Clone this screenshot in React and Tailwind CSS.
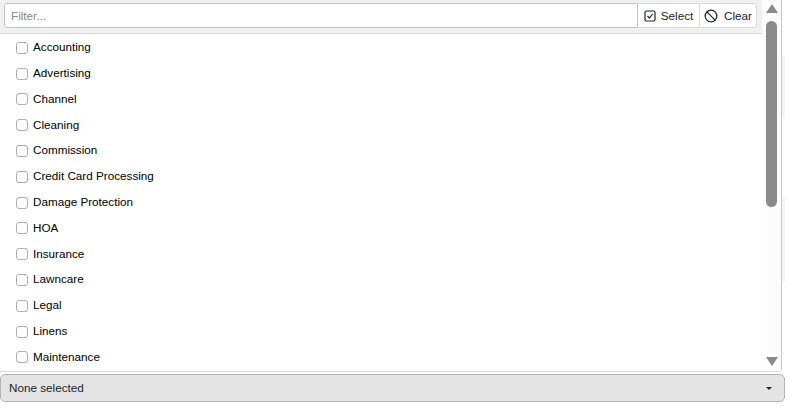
import React from 'react';
import { Ban } from 'lucide-react';

const items = [
  'Accounting',
  'Advertising',
  'Channel',
  'Cleaning',
  'Commission',
  'Credit Card Processing',
  'Damage Protection',
  'HOA',
  'Insurance',
  'Lawncare',
  'Legal',
  'Linens',
  'Maintenance',
];

function CheckSquare() {
  return (
    <svg width="12" height="12" viewBox="0 0 12 12" fill="none" stroke="#212529">
      <rect x="1" y="1" width="10" height="10" rx="1.5" strokeWidth="1.2" />
      <path d="M3.5 6l2 2 3-4" strokeWidth="1.2" />
    </svg>
  );
}

function App() {
  return (
    <div className="w-[790px] h-[410px] bg-white overflow-hidden font-['Liberation_Sans',Arial,sans-serif] text-[11.7px] text-black">
      <div className="flex h-[372px]">
        <div className="w-[782px] flex border-r border-b border-r-[#c8c8c8] border-b-[#dcdcdc] rounded-br">
          <div className="flex-1 min-w-0 flex flex-col">
            <div className="h-[34px] shrink-0 flex pl-[4px] pr-[5px] pt-[3px] bg-[#f0f0f0] border-b border-[#d9d9d9]">
              <input
                placeholder="Filter..."
                className="flex-1 min-w-0 h-[25px] px-[6px] bg-white border border-[#c4c4c4] rounded-l-[3px] outline-none placeholder:text-[#8a8a8a]"
              />
              <button className="h-[25px] w-[61px] flex items-center justify-center gap-[5px] bg-white border-y border-[#dcdcdc] text-[#212529]">
                <CheckSquare />
                Select
              </button>
              <button className="h-[25px] w-[58px] flex items-center justify-center gap-[6px] bg-white border border-[#dcdcdc] rounded-r-[3px] text-[#212529]">
                <Ban size={14} color="#212529" strokeWidth={2.2} />
                Clear
              </button>
            </div>
            <ul className="flex-1 overflow-hidden">
              {items.map((name) => (
                <li key={name} className="h-[25.8px] flex items-center pl-[16px]">
                  <span className="w-[12px] h-[12px] mr-[5px] mt-[2px] border border-[#b0b0b0] rounded-[3px] bg-white" />
                  <span>{name}</span>
                </li>
              ))}
            </ul>
          </div>
          <div className="w-[19px] shrink-0 flex flex-col items-center bg-[#fcfcfc]">
            <div className="w-0 h-0 mt-[4px] border-x-[6.5px] border-x-transparent border-b-[9px] border-b-[#8a8a8a]" />
            <div className="w-[11px] h-[186px] mt-[8px] rounded-full bg-[#8a8a8a]" />
            <div className="w-0 h-0 mt-auto mb-[5px] border-x-[6.5px] border-x-transparent border-t-[9px] border-t-[#8a8a8a]" />
          </div>
        </div>
        <div className="w-[3px] flex flex-col">
          <div className="h-[56px]" />
          <div className="h-[62px] bg-[#f5f5f5]" />
          <div className="h-[77px]" />
          <div className="h-[87px] bg-[#f5f5f5]" />
        </div>
      </div>
      <div className="w-[785px] h-[28px] mt-[2px] flex items-center justify-between pl-[8px] pr-[12px] bg-[#e4e4e4] border border-[#b4b4b4] rounded-[5px] text-[#212529]">
        <span>None selected</span>
        <span className="w-0 h-0 border-x-[3px] border-x-transparent border-t-[3px] border-t-[#212529]" />
      </div>
    </div>
  );
}

export default App;
